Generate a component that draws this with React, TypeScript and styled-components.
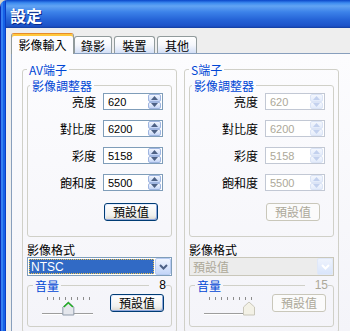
import React from 'react';
import styled, { createGlobalStyle, css } from 'styled-components';

const GlobalStyle = createGlobalStyle`
  html, body {
    margin: 0;
    padding: 0;
    background: #d8d4c4;
  }
  body {
    font-family: "Noto Sans CJK TC", "Liberation Sans", sans-serif;
    font-size: 12px;
  }
`;

const CJK = `"Noto Sans CJK TC", "Liberation Sans", sans-serif`;
const LATIN = `"Liberation Sans", "Noto Sans CJK TC", sans-serif`;

const Window = styled.div`
  display: flex;
  width: 350px;
  height: 331px;
  overflow: hidden;
  border-top-left-radius: 7px;
`;

const LeftFrame = styled.div`
  flex: 0 0 6px;
  background: linear-gradient(
    to right,
    #0a2fb8 0,
    #0a2fb8 1px,
    #3580f2 1px,
    #3580f2 3px,
    #1561e6 3px,
    #1561e6 5px,
    #0b3fc6 5px
  );
`;

const Main = styled.div`
  flex: 1;
  display: flex;
  flex-direction: column;
  min-width: 0;
`;

const TitleBar = styled.div`
  flex: 0 0 28px;
  box-sizing: border-box;
  display: flex;
  align-items: center;
  padding: 2px 0 0 4px;
  background: linear-gradient(
    to bottom,
    #0a46c9 0,
    #3d8cf0 3px,
    #62a4f3 6px,
    #3c82e9 12px,
    #2462d6 20px,
    #1c52c8 26px,
    #123d9e 28px
  );
  color: #fff;
  font-family: ${CJK};
  font-size: 16px;
  font-weight: bold;
  text-shadow: 1px 1px 0 #0b2a8a;
`;

const Body = styled.div`
  flex: 1;
  display: flex;
  flex-direction: column;
  min-height: 0;
  padding: 5px 0 0 5px;
  background: #eeeeee;
`;

const TabStrip = styled.div`
  display: flex;
  align-items: flex-end;
  height: 20px;
  position: relative;
  z-index: 1;
`;

const Tab = styled.div<{ $active?: boolean; $w: number }>`
  box-sizing: border-box;
  width: ${p => p.$w}px;
  display: flex;
  align-items: center;
  justify-content: center;
  border: 1px solid #919b9c;
  border-bottom: none;
  border-radius: 3px 3px 0 0;
  font-family: ${CJK};
  font-size: 12px;
  color: #000;
  ${p =>
    p.$active
      ? css`
          height: 21px;
          margin: 0 -2px -1px 0;
          border-top-color: #e68b2c;
          background: #fcfcfe;
          box-shadow: inset 0 2px 0 #ffc83c;
          padding-top: 1px;
        `
      : css`
          height: 17px;
          margin-left: 2px;
          background: linear-gradient(#ffffff, #f5f7fc 50%, #d3dff6);
        `}
`;

const Panel = styled.div`
  flex: 1;
  width: 345px;
  box-sizing: border-box;
  display: flex;
  align-items: flex-start;
  gap: 7px;
  padding: 8px 0 0 10px;
  border: 1px solid #889fbd;
  border-right: none;
  border-bottom: none;
  background: linear-gradient(to bottom, #fcfcfe, #f4f4f9);
`;

const Group = styled.fieldset`
  margin: 0;
  min-width: 0;
  box-sizing: border-box;
  border: 1px solid #d0d0c8;
  border-radius: 3px;
  padding: 0 4px 5px 4px;
`;

const SourceGroup = styled(Group)`
  width: 155px;
`;

const AdjustGroup = styled(Group)`
  margin-top: 1px;
  padding: 0 8px 15px 0;
`;

const VolumeGroup = styled(Group)`
  position: relative;
  margin-top: 2px;
  padding: 0 7px 10px 4px;
`;

const GroupTitle = styled.legend<{ $shift?: number }>`
  padding: 0 2px;
  margin-left: ${p => p.$shift ?? 0}px;
  color: #0046d5;
  font-family: ${CJK};
  font-size: 12px;
  line-height: 15px;
`;

const FieldGrid = styled.div`
  display: grid;
  grid-template-columns: 1fr 60px;
  column-gap: 7px;
  row-gap: 10px;
`;

const FieldLabel = styled.span`
  text-align: right;
  line-height: 17px;
  font-family: ${CJK};
  font-size: 12px;
  color: #000;
`;

const SpinBox = styled.div<{ $disabled?: boolean }>`
  height: 17px;
  box-sizing: border-box;
  display: flex;
  align-items: center;
  padding: 0 1px 0 4px;
  border: 1px solid ${p => (p.$disabled ? '#c2c8d4' : '#7f9db9')};
  background: #fff;
  font-family: ${LATIN};
  font-size: 11px;
  color: ${p => (p.$disabled ? '#aca899' : '#000')};
`;

const SpinValue = styled.span`
  flex: 1;
`;

const SpinButtons = styled.div`
  display: flex;
  flex-direction: column;
  width: 13px;
  height: 15px;
`;

const SpinArrow = styled.span<{ $disabled?: boolean }>`
  flex: 1;
  box-sizing: border-box;
  display: flex;
  align-items: center;
  justify-content: center;
  border: 1px solid ${p => (p.$disabled ? '#dbe4f6' : '#9fb5e0')};
  border-radius: 2px;
  background: ${p =>
    p.$disabled
      ? 'linear-gradient(#f4f7fd, #e3ebfa)'
      : 'linear-gradient(#f2f6fe, #c4d5f7)'};
`;

const PushButton = styled.button<{ $disabled?: boolean }>`
  width: 54px;
  height: 18px;
  box-sizing: border-box;
  padding: 0;
  border-radius: 3px;
  font-family: ${CJK};
  font-size: 12px;
  line-height: 14px;
  ${p =>
    p.$disabled
      ? css`
          border: 1px solid #c9c7ba;
          background: #fbfbfb;
          color: #aca899;
        `
      : css`
          border: 1px solid #003c74;
          background: linear-gradient(#ffffff, #f1f1ee 70%, #d9d6cc);
          box-shadow: inset 1px 1px 0 #e3ecff, inset -1px -1px 0 #8fa6db;
          color: #000;
        `}
`;

const GridButton = styled(PushButton)`
  grid-column: 2;
  justify-self: start;
  margin: 2px 0 0 1px;
`;

const FormatLabel = styled.div`
  margin-top: 5px;
  line-height: 15px;
  font-family: ${CJK};
  font-size: 12px;
  color: #000;
`;

const Select = styled.div<{ $disabled?: boolean }>`
  height: 19px;
  box-sizing: border-box;
  display: flex;
  align-items: stretch;
  border: 1px solid ${p => (p.$disabled ? '#c9c7ba' : '#7f9db9')};
  background: ${p => (p.$disabled ? '#ececec' : '#fff')};
`;

const SelectValue = styled.div<{ $disabled?: boolean }>`
  flex: 1;
  display: flex;
  align-items: center;
  margin: 1px 1px 1px 1px;
  padding-left: 2px;
  font-size: 12px;
  ${p =>
    p.$disabled
      ? css`
          font-family: ${CJK};
          color: #aca899;
        `
      : css`
          font-family: ${LATIN};
          color: #fff;
          background: #316ac5;
          outline: 1px dotted #e8c050;
          outline-offset: -1px;
        `}
`;

const DropButton = styled.div<{ $disabled?: boolean }>`
  width: 16px;
  box-sizing: border-box;
  display: flex;
  align-items: center;
  justify-content: center;
  border: 1px solid ${p => (p.$disabled ? '#e0e8f8' : '#b7cbf2')};
  border-radius: 2px;
  background: ${p =>
    p.$disabled
      ? 'linear-gradient(#eef3fd, #d9e5fb)'
      : 'linear-gradient(#f0f5fe, #c3d5f8)'};
`;

const VolumeRow = styled.div`
  display: flex;
  align-items: flex-start;
  justify-content: space-between;
  margin-top: 1px;
`;

const SliderArt = styled.svg`
  display: block;
  margin-left: 8px;
`;

const VolumeValue = styled.span<{ $disabled?: boolean }>`
  position: absolute;
  right: 5px;
  top: -15px;
  padding-left: 10px;
  background: #f5f5fa;
  font-family: ${LATIN};
  font-size: 12px;
  line-height: 14px;
  color: ${p => (p.$disabled ? '#aca899' : '#000')};
`;

function Arrow({ up, disabled }: { up?: boolean; disabled?: boolean }) {
  return (
    <svg width="7" height="4" viewBox="0 0 7 4">
      <polygon
        points={up ? '0,4 3.5,0 7,4' : '0,0 7,0 3.5,4'}
        fill={disabled ? '#c3d1ee' : '#4d6185'}
      />
    </svg>
  );
}

function Chevron({ disabled }: { disabled?: boolean }) {
  return (
    <svg width="9" height="6" viewBox="0 0 9 6">
      <path
        d="M1 1 L4.5 4.5 L8 1"
        fill="none"
        stroke={disabled ? '#ffffff' : '#4d6185'}
        strokeWidth="2"
      />
    </svg>
  );
}

function Slider({ value, max, disabled }: { value: number; max: number; disabled?: boolean }) {
  const cx = 7 + (value / max) * 40;
  const ticks = Array.from({ length: 8 }, (_, i) => 7 + i * 6);
  const thumb = `${cx - 5.5},21 ${cx - 5.5},13 ${cx},8 ${cx + 5.5},13 ${cx + 5.5},21`;
  return (
    <SliderArt width="56" height="22" viewBox="0 0 56 22">
      {ticks.map(x => (
        <line key={x} x1={x + 0.5} y1="3" x2={x + 0.5} y2="6" stroke="#8c8c8c" />
      ))}
      <line x1="2" y1="19.5" x2="53" y2="19.5" stroke="#9d9d9d" />
      <line x1="2" y1="20.5" x2="53" y2="20.5" stroke="#ffffff" />
      <polygon
        points={thumb}
        fill={disabled ? '#f3f1e6' : '#e4e6ec'}
        stroke={disabled ? '#c9c7ba' : '#8f9bab'}
        strokeWidth="1"
      />
      {!disabled && (
        <polyline
          points={`${cx - 4.5},13 ${cx},8.8 ${cx + 4.5},13`}
          fill="none"
          stroke="#21b021"
          strokeWidth="1.5"
        />
      )}
    </SliderArt>
  );
}

const ADJUST_ROWS = [
  { label: '亮度', value: '620' },
  { label: '對比度', value: '6200' },
  { label: '彩度', value: '5158' },
  { label: '飽和度', value: '5500' },
];

type SourceProps = {
  title: string;
  format: string;
  volume: number;
  disabled?: boolean;
};

function SourcePanel({ title, format, volume, disabled }: SourceProps) {
  return (
    <SourceGroup>
      <GroupTitle>{title}</GroupTitle>
      <AdjustGroup>
        <GroupTitle $shift={2}>影像調整器</GroupTitle>
        <FieldGrid>
          {ADJUST_ROWS.map(row => (
            <React.Fragment key={row.label}>
              <FieldLabel>{row.label}</FieldLabel>
              <SpinBox $disabled={disabled}>
                <SpinValue>{row.value}</SpinValue>
                <SpinButtons>
                  <SpinArrow $disabled={disabled}>
                    <Arrow up disabled={disabled} />
                  </SpinArrow>
                  <SpinArrow $disabled={disabled}>
                    <Arrow disabled={disabled} />
                  </SpinArrow>
                </SpinButtons>
              </SpinBox>
            </React.Fragment>
          ))}
          <GridButton $disabled={disabled}>預設值</GridButton>
        </FieldGrid>
      </AdjustGroup>
      <FormatLabel>影像格式</FormatLabel>
      <Select $disabled={disabled}>
        <SelectValue $disabled={disabled}>{format}</SelectValue>
        <DropButton $disabled={disabled}>
          <Chevron disabled={disabled} />
        </DropButton>
      </Select>
      <VolumeGroup>
        <GroupTitle $shift={1}>音量</GroupTitle>
        <VolumeValue $disabled={disabled}>{volume}</VolumeValue>
        <VolumeRow>
          <Slider value={volume} max={15} disabled={disabled} />
          <PushButton $disabled={disabled}>預設值</PushButton>
        </VolumeRow>
      </VolumeGroup>
    </SourceGroup>
  );
}

const TABS = [
  { label: '影像輸入', w: 63, active: true },
  { label: '錄影', w: 38 },
  { label: '裝置', w: 41 },
  { label: '其他', w: 40 },
];

export default function App() {
  return (
    <>
      <GlobalStyle />
      <Window>
        <LeftFrame />
        <Main>
          <TitleBar>設定</TitleBar>
          <Body>
            <TabStrip>
              {TABS.map(t => (
                <Tab key={t.label} $w={t.w} $active={t.active}>
                  {t.label}
                </Tab>
              ))}
            </TabStrip>
            <Panel>
              <SourcePanel title="AV端子" format="NTSC" volume={8} />
              <SourcePanel title="S端子" format="預設值" volume={15} disabled />
            </Panel>
          </Body>
        </Main>
      </Window>
    </>
  );
}
